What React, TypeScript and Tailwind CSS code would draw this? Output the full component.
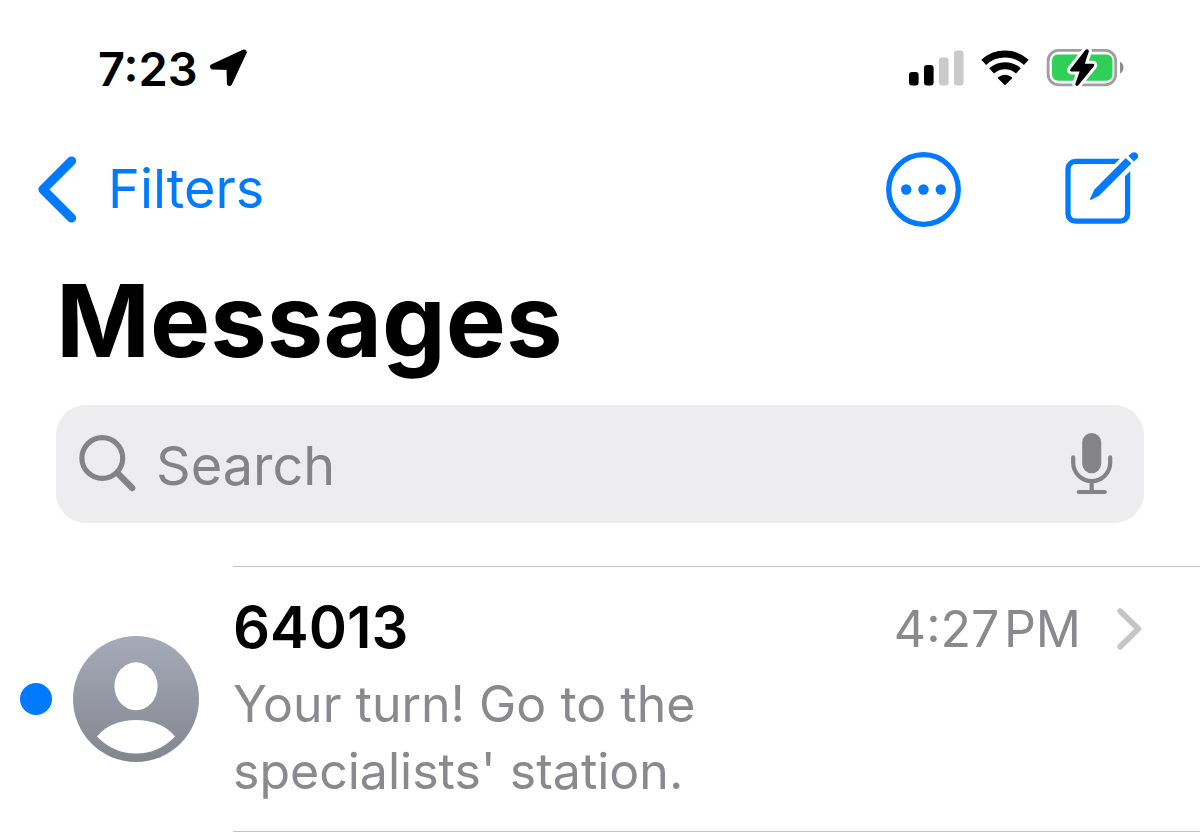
import React, { FC } from "react";

interface Conversation {
  id: number;
  sender: string;
  preview: string;
  time: string;
  unread: boolean;
}

const conversations: Conversation[] = [
  {
    id: 1,
    sender: "64013",
    preview: "Your turn! Go to the specialists' station.",
    time: "4:27\u200APM",
    unread: true,
  },
];

const LocationIcon: FC = () => (
  <svg width="38" height="38" viewBox="0 0 38 38" aria-hidden="true">
    <path
      d="M34 3.2 2.8 17.8 19.2 18.2 19.6 34.2Z"
      fill="#000"
      stroke="#000"
      strokeWidth="5.4"
      strokeLinejoin="round"
    />
  </svg>
);

const SignalIcon: FC = () => (
  <svg width="55" height="36" viewBox="0 0 55 36" aria-hidden="true">
    <rect x="0" y="22" width="9.6" height="13.5" rx="3" fill="#000" />
    <rect x="15" y="15" width="9.6" height="20.5" rx="3" fill="#000" />
    <rect x="30" y="7.5" width="9.6" height="28" rx="3" fill="#cacaca" />
    <rect x="45" y="0.5" width="9.6" height="35" rx="3" fill="#cacaca" />
  </svg>
);

const WifiIcon: FC = () => (
  <svg width="48" height="36" viewBox="0 0 48 36" aria-hidden="true">
    <g fill="none" stroke="#000" strokeWidth="7">
      <path d="M2.7 12.4A31.3 31.3 0 0 1 45.3 12.4" />
      <path d="M10.6 20.9A19.7 19.7 0 0 1 37.4 20.9" />
    </g>
    <path
      d="M24 34.3 17.6 27.9A9.6 9.6 0 0 1 30.4 27.9Z"
      fill="#000"
      stroke="#000"
      strokeWidth="1.6"
      strokeLinejoin="round"
    />
  </svg>
);

const BatteryIcon: FC = () => (
  <svg width="78" height="40" viewBox="0 0 78 40" aria-hidden="true">
    <rect
      x="2.1"
      y="2.4"
      width="67.6"
      height="34.4"
      rx="10.5"
      fill="none"
      stroke="#a19da2"
      strokeWidth="2.8"
    />
    <path d="M74 13.7C78.7 15.5 78.7 23.7 74 25.5Z" fill="#8f8c90" />
    <rect x="6" y="6.4" width="60.5" height="26.4" rx="6" fill="#30cf57" />
    <path
      d="M39.6 1.8 24.4 21.2Q23.4 23.2 25.6 23.4H33.6L29.2 36.2Q29.8 38.8 32.2 37.4L48 18Q49 15.9 46.8 15.8H38.8L42.9 3.2Q42.6 0.2 39.6 1.8Z"
      fill="#000"
      stroke="#fff"
      strokeWidth="6"
      strokeLinejoin="round"
      paintOrder="stroke"
    />
  </svg>
);

const BackIcon: FC = () => (
  <svg width="38" height="67" viewBox="0 0 38 67" aria-hidden="true">
    <path
      d="M33.5 5 5 33.5 33.5 62"
      fill="none"
      stroke="currentColor"
      strokeWidth="9.2"
      strokeLinecap="round"
      strokeLinejoin="round"
    />
  </svg>
);

const MoreIcon: FC = () => (
  <svg width="75" height="75" viewBox="0 0 75 75" aria-hidden="true">
    <circle
      cx="37.5"
      cy="37.5"
      r="34.8"
      fill="none"
      stroke="currentColor"
      strokeWidth="5.3"
    />
    <g fill="currentColor">
      <circle cx="20.2" cy="37.5" r="5.2" />
      <circle cx="37.5" cy="37.5" r="5.2" />
      <circle cx="54.8" cy="37.5" r="5.2" />
    </g>
  </svg>
);

const ComposeIcon: FC = () => (
  <svg width="74" height="75" viewBox="0 0 74 75" aria-hidden="true">
    <rect
      x="3"
      y="9.4"
      width="59.6"
      height="59.8"
      rx="7.5"
      fill="none"
      stroke="currentColor"
      strokeWidth="5.3"
    />
    {/* gap around the pencil */}
    <path d="M33 40 73 0" stroke="#fff" strokeWidth="16" />
    <path
      d="M60.8 6 66.4 11.6 34.4 43.6 25.8 47.9Q24.6 48 25.1 46.8L29.2 37.8Z"
      fill="currentColor"
    />
    <path
      d="M63.4 3.8 66.2 1.4Q69 -1 72 1.6Q74.6 4.6 71.6 7L68.8 9.4Z"
      fill="currentColor"
    />
  </svg>
);

const SearchIcon: FC = () => (
  <svg width="57" height="58" viewBox="0 0 57 58" aria-hidden="true">
    <g fill="none" stroke="#848388" strokeLinecap="round">
      <circle cx="23.3" cy="23" r="20.4" strokeWidth="5.2" />
      <path d="M39 38.6 53.2 53" strokeWidth="6.4" />
    </g>
  </svg>
);

const MicIcon: FC = () => (
  <svg width="42" height="62" viewBox="0 0 42 62" aria-hidden="true">
    <rect x="11.2" y="0" width="19" height="40.3" rx="9.5" fill="#848388" />
    <g fill="none" stroke="#848388" strokeWidth="4.2" strokeLinecap="round">
      <path d="M2.2 24.4V29.6A18.5 18.5 0 0 0 39.2 29.6V24.4" />
      <path d="M20.7 48.4V58.9M7.8 59H33.8" />
    </g>
  </svg>
);

const ChevronIcon: FC = () => (
  <svg width="25" height="42" viewBox="0 0 25 42" aria-hidden="true">
    <path
      d="M3.2 3.2 21.3 20.8 3.2 38.6"
      fill="none"
      stroke="#c5c5c7"
      strokeWidth="5.8"
      strokeLinecap="round"
      strokeLinejoin="round"
    />
  </svg>
);

const Avatar: FC = () => (
  <svg
    className="shrink-0"
    width="126"
    height="126"
    viewBox="0 0 126 126"
    aria-hidden="true"
  >
    <defs>
      <linearGradient id="avatar" x1="0" y1="0" x2="0" y2="1">
        <stop offset="0" stopColor="#a5abb9" />
        <stop offset="1" stopColor="#84868f" />
      </linearGradient>
    </defs>
    <circle cx="63" cy="63" r="63" fill="url(#avatar)" />
    <ellipse cx="63" cy="50.3" rx="21.5" ry="24" fill="#fff" />
    <path
      d="M24 100.5C33 89 48 84 63 84S93 89 102 100.5C91 112 78 117.5 63 117.5S35 112 24 100.5Z"
      fill="#fff"
    />
  </svg>
);

const StatusBar: FC = () => (
  <div className="flex h-[136px] items-center justify-between pl-[98px] pr-[76px]">
    <div className="flex items-center gap-3">
      <span className="text-[47px] leading-none font-semibold">7:23</span>
      <LocationIcon />
    </div>
    <div className="flex items-center gap-[17px]">
      <SignalIcon />
      <WifiIcon />
      <BatteryIcon />
    </div>
  </div>
);

const NavBar: FC = () => (
  <nav className="flex h-[106px] items-center justify-between pl-[38px] pr-[61px] text-[#007aff]">
    <button type="button" className="flex items-center gap-8">
      <BackIcon />
      <span className="text-[54px] leading-none">Filters</span>
    </button>
    <div className="flex items-center gap-[104px]">
      <button type="button" aria-label="More">
        <MoreIcon />
      </button>
      <button type="button" aria-label="Compose">
        <ComposeIcon />
      </button>
    </div>
  </nav>
);

const SearchBar: FC = () => (
  <div className="mx-14 mt-[25px] flex h-[118px] items-center rounded-[30px] bg-[#ededef] pl-[23px] pr-[31px]">
    <label htmlFor="search" className="shrink-0">
      <SearchIcon />
    </label>
    <input
      id="search"
      type="text"
      aria-label="Search"
      placeholder="Search"
      className="ml-5 min-w-0 flex-1 bg-transparent pt-0.5 text-[54px] text-black outline-none placeholder:text-[#848388]"
    />
    <button type="button" aria-label="Dictate" className="shrink-0">
      <MicIcon />
    </button>
  </div>
);

const ConversationRow: FC<{ conversation: Conversation }> = ({
  conversation,
}) => {
  const { sender, preview, time, unread } = conversation;

  return (
    <li className="flex items-center pl-5">
      <span
        className={
          unread ? "size-8 shrink-0 rounded-full bg-[#007aff]" : "size-8 shrink-0"
        }
      />
      <div className="ml-[21px] mr-[34px] shrink-0">
        <Avatar />
      </div>
      <div className="min-w-0 flex-1 border-y border-[#c6c6c8] py-[26px] pr-[58px]">
        <div className="flex items-center justify-between">
          <h2 className="text-[58px] leading-[68px] font-semibold">{sender}</h2>
          <div className="mt-1 flex items-center gap-9 text-[#8a8a8e]">
            <time className="text-[50px] leading-[64px]">{time}</time>
            <ChevronIcon />
          </div>
        </div>
        <p className="mt-[10px] max-w-[500px] text-[50px] leading-[67px] text-[#8a8a8e]">
          {preview}
        </p>
      </div>
    </li>
  );
};

const App: FC = () => {
  return (
    <main className="min-h-screen bg-white font-['Inter',sans-serif] text-black">
      <StatusBar />
      <NavBar />
      <h1 className="mt-[18px] px-14 text-[101px] leading-[120px] font-bold">
        Messages
      </h1>
      <SearchBar />
      <ul className="mt-[43px]">
        {conversations.map((conversation) => (
          <ConversationRow key={conversation.id} conversation={conversation} />
        ))}
      </ul>
    </main>
  );
};

export default App;
